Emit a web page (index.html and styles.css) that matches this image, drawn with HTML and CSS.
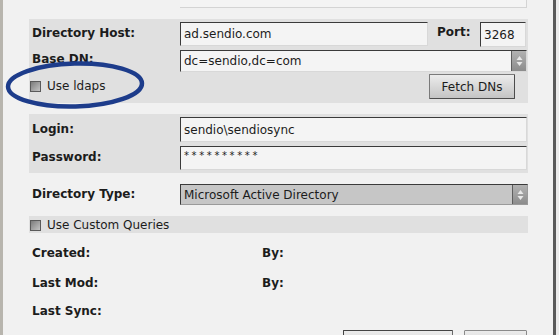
FILE: index.html
```html
<!DOCTYPE html>
<html lang="en">
<head>
  <meta charset="UTF-8">
  <title>Directory Settings</title>
  <link rel="stylesheet" href="styles.css">
</head>
<body>
  <div class="window">
    <div class="prev-field"></div>

    <div class="group group-server">
      <div class="row row-host">
        <label class="label">Directory Host:</label>
        <input class="field field-host" type="text" value="ad.sendio.com">
        <label class="label label-port">Port:</label>
        <input class="field field-port" type="text" value="3268">
      </div>
      <div class="row row-dn">
        <label class="label">Base DN:</label>
        <div class="select select-dn">
          <span class="select-text">dc=sendio,dc=com</span>
          <span class="spinner">
            <svg width="13" height="14" viewBox="0 0 13 14"><polygon points="6.5,2 9.5,6 3.5,6" fill="#e8e8e8"/><polygon points="6.5,12 9.5,8 3.5,8" fill="#e8e8e8"/></svg>
          </span>
        </div>
      </div>
      <div class="row row-ldaps">
        <label class="check"><span class="box"></span>Use ldaps</label>
        <button class="btn btn-fetch">Fetch DNs</button>
      </div>
    </div>

    <div class="group group-login">
      <div class="label-col">
        <label class="label">Login:</label>
        <label class="label">Password:</label>
      </div>
      <div class="field-col">
        <input class="field field-login" type="text" value="sendio\sendiosync">
        <input class="field field-pass" type="text" value="**********">
      </div>
    </div>

    <div class="row row-type">
      <label class="label">Directory Type:</label>
      <div class="select select-type">
        <span class="select-text">Microsoft Active Directory</span>
        <span class="spinner">
          <svg width="13" height="14" viewBox="0 0 13 14"><polygon points="6.5,2 9.5,6 3.5,6" fill="#e8e8e8"/><polygon points="6.5,12 9.5,8 3.5,8" fill="#e8e8e8"/></svg>
        </span>
      </div>
    </div>

    <div class="group group-custom">
      <label class="check"><span class="box"></span>Use Custom Queries</label>
    </div>

    <div class="info info-created">
      <span class="info-label">Created:</span>
      <span class="info-label">By:</span>
    </div>
    <div class="info info-mod">
      <span class="info-label">Last Mod:</span>
      <span class="info-label">By:</span>
    </div>
    <div class="info info-sync">
      <span class="info-label">Last Sync:</span>
    </div>

    <div class="actions">
      <button class="btn btn-test" aria-label="Test Connection"></button>
      <button class="btn btn-save" aria-label="Save"></button>
    </div>

    <!-- annotation drawn over the form -->
    <svg class="highlight" width="142" height="54" viewBox="0 0 142 54">
      <ellipse cx="70" cy="26" rx="67" ry="21.5" fill="none" stroke="#1d3c8b" stroke-width="4.5" transform="rotate(-1.5 70 26)"/>
    </svg>
  </div>
</body>
</html>
```

FILE: styles.css
```css
body {
  margin: 0;
  background: #ebebeb;
  font-family: "DejaVu Sans", Verdana, sans-serif;
  font-size: 12px;
  color: #1c1c1c;
  overflow: hidden;
}
.window {
  position: relative;
  width: 524px;
  height: 335px;
  padding-left: 26px;
  background: #f1f1f1;
  border-left: 3px solid #b8b5ae;
  border-right: 3px solid #5a5a5a;
  overflow: hidden;
}
.prev-field {
  margin-left: 151px;
  width: 346px;
  height: 7px;
  background: #f4f4f4;
  border-right: 1px solid #d4d4d4;
  border-bottom: 1px solid #d4d4d4;
}
.group {
  background: #e0e0e0;
  width: 499px;
}
.group-server {
  margin-top: 11px;
  width: 496px;
  padding: 3px 0 4px 3px;
}
.row {
  display: flex;
  align-items: flex-start;
}
.row-host .label {
  padding-top: 4px;
}
.row-dn {
  margin-top: 3px;
}
.row-ldaps {
  margin-top: 2px;
}
.label {
  width: 148px;
  padding-top: 2px;
  font-weight: bold;
  line-height: 15px;
}
.row-host .label-port {
  width: 43px;
  margin-left: 9px;
  padding-top: 3px;
}
.field {
  box-sizing: border-box;
  height: 25px;
  margin: 0;
  padding: 0 3px;
  border: 1px solid;
  border-color: #3a3a3a #d8d8d8 #d8d8d8 #3a3a3a;
  background: #f4f4f4;
  font: inherit;
  color: inherit;
  outline: none;
}
.field-host {
  width: 248px;
  height: 24px;
}
.field-port {
  width: 46px;
}
.select {
  box-sizing: border-box;
  display: flex;
  border: 1px solid;
  border-color: #3a3a3a #d8d8d8 #d8d8d8 #3a3a3a;
  background: #f4f4f4;
}
.select-text {
  flex: 1;
  padding-left: 3px;
  line-height: 20px;
}
.select-dn {
  width: 347px;
  height: 22px;
}
.select-type {
  width: 348px;
  height: 21px;
  background: #c6c6c6;
  border-color: #3a3a3a #9a9a9a #9a9a9a #3a3a3a;
}
.select-type .select-text {
  padding-top: 2px;
  line-height: 17px;
}
.spinner {
  display: flex;
  align-items: center;
  justify-content: center;
  width: 14px;
  background: linear-gradient(#b2b2b2, #8c8c8c);
  border-left: 1px solid #5e5e5e;
}
.check {
  display: flex;
  align-items: center;
  gap: 6px;
  line-height: 15px;
}
.row-ldaps .check {
  margin: 5px 0 0 -2px;
}
.box {
  width: 9px;
  height: 9px;
  border: 1px solid #5a5a5a;
  background: linear-gradient(135deg, #7c7c7c, #c4c4c4);
}
.btn {
  box-sizing: border-box;
  height: 25px;
  padding: 0;
  border: 1px solid #6c6c6c;
  border-color: #7a7a7a #4c4c4c #4c4c4c #7a7a7a;
  border-radius: 1px;
  background: linear-gradient(#ececec, #c4c4c4);
  font: inherit;
  color: inherit;
}
.btn-fetch {
  width: 86px;
  margin-left: auto;
  margin-right: 13px;
}
.group-login {
  display: flex;
  margin-top: 11px;
  width: 496px;
  padding: 3px 0 3px 3px;
}
.label-col {
  display: flex;
  flex-direction: column;
  gap: 11px;
  padding-top: 3px;
}
.field-col {
  display: flex;
  flex-direction: column;
  gap: 4px;
}
.field-login {
  width: 347px;
}
.field-pass {
  width: 347px;
  height: 24px;
  padding-bottom: 6px;
  letter-spacing: 2.6px;
  font-size: 10px;
}
.row-type {
  margin-top: 11px;
  padding-left: 3px;
}
.row-type .label {
  padding-top: 3px;
}
.group-custom {
  display: flex;
  align-items: center;
  margin-top: 11px;
  height: 17px;
  padding-left: 1px;
  width: 498px;
}
.group-custom .check {
  padding-top: 1px;
}
.info {
  display: flex;
  padding-left: 3px;
  line-height: 15px;
  font-weight: bold;
}
.info-label {
  width: 230px;
}
.info-created {
  margin-top: 13px;
}
.info-mod {
  margin-top: 15px;
}
.info-sync {
  margin-top: 13px;
}
.actions {
  display: flex;
  justify-content: flex-end;
  gap: 11px;
  width: 498px;
  margin-top: 11px;
}
.btn-test {
  width: 110px;
  height: 26px;
  border-color: #444 #6a6a6a #6a6a6a #444;
}
.btn-save {
  width: 63px;
  height: 26px;
  border-color: #8a8a8a;
}
.highlight {
  position: absolute;
  left: 2px;
  top: 59px;
  pointer-events: none;
}
```
